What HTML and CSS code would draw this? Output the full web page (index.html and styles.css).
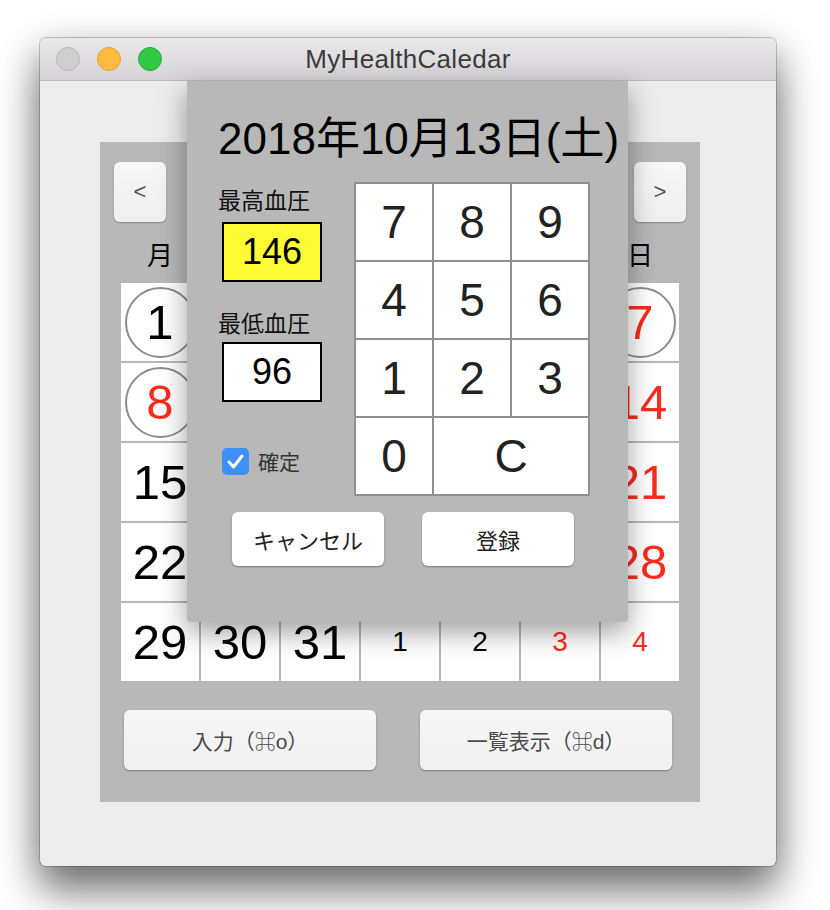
FILE: index.html
```html
<!DOCTYPE html>
<html lang="ja">
<head>
<meta charset="utf-8">
<title>MyHealthCaledar</title>
<link rel="stylesheet" href="styles.css">
</head>
<body>
<div class="stage">
  <div class="window">
    <div class="titlebar">
      <div class="lights">
        <span class="light close"></span>
        <span class="light min"></span>
        <span class="light max"></span>
      </div>
      <div class="wtitle">MyHealthCaledar</div>
      <div></div>
    </div>
    <div class="content">
      <div class="panel">
        <div class="nav">
          <button class="navbtn">&lt;</button>
          <button class="navbtn">&gt;</button>
        </div>
        <div class="weekdays">
          <span>月</span><span>火</span><span>水</span><span>木</span><span>金</span><span>土</span><span>日</span>
        </div>
        <div class="cal">
          <div class="cell"><span class="ring">1</span></div>
          <div class="cell">2</div>
          <div class="cell">3</div>
          <div class="cell">4</div>
          <div class="cell">5</div>
          <div class="cell">6</div>
          <div class="cell red"><span class="ring">7</span></div>

          <div class="cell red"><span class="ring">8</span></div>
          <div class="cell">9</div>
          <div class="cell">10</div>
          <div class="cell">11</div>
          <div class="cell">12</div>
          <div class="cell">13</div>
          <div class="cell red">14</div>

          <div class="cell">15</div>
          <div class="cell">16</div>
          <div class="cell">17</div>
          <div class="cell">18</div>
          <div class="cell">19</div>
          <div class="cell">20</div>
          <div class="cell red">21</div>

          <div class="cell">22</div>
          <div class="cell">23</div>
          <div class="cell">24</div>
          <div class="cell">25</div>
          <div class="cell">26</div>
          <div class="cell">27</div>
          <div class="cell red">28</div>

          <div class="cell">29</div>
          <div class="cell">30</div>
          <div class="cell">31</div>
          <div class="cell small">1</div>
          <div class="cell small">2</div>
          <div class="cell small red">3</div>
          <div class="cell small red">4</div>
        </div>
        <div class="actions">
          <button class="abtn">入力（⌘o）</button>
          <button class="abtn">一覧表示（⌘d）</button>
        </div>
      </div>
    </div>

    <div class="sheet">
      <div class="sheet-title">2018年10月13日(土)</div>
      <div class="sheet-body">
        <div class="fields">
          <div class="flabel">最高血圧</div>
          <div class="fbox hi">146</div>
          <div class="flabel second">最低血圧</div>
          <div class="fbox lo">96</div>
          <label class="confirm">
            <span class="check"><svg width="27" height="27" viewBox="0 0 27 27"><polyline points="7,14 11.5,19 20,8" fill="none" stroke="#fff" stroke-width="3" stroke-linecap="round" stroke-linejoin="round"/></svg></span>
            <span class="clabel">確定</span>
          </label>
        </div>
        <div class="pad">
          <div class="key">7</div>
          <div class="key">8</div>
          <div class="key">9</div>
          <div class="key">4</div>
          <div class="key">5</div>
          <div class="key">6</div>
          <div class="key">1</div>
          <div class="key">2</div>
          <div class="key">3</div>
          <div class="key">0</div>
          <div class="key wide">C</div>
        </div>
      </div>
      <div class="sheet-actions">
        <button class="sbtn">キャンセル</button>
        <button class="sbtn">登録</button>
      </div>
    </div>
  </div>
</div>
</body>
</html>
```
FILE: styles.css
```css
* { box-sizing: border-box; }
html, body { margin: 0; background: #ffffff; }
body {
  font-family: "Liberation Sans", "Noto Sans CJK JP", sans-serif;
  color: #000;
  min-height: 910px;
}
button { font-family: inherit; }

.stage { padding: 38px 0 44px 40px; }

.window {
  position: relative;
  width: 736px;
  height: 828px;
  background: #ececec;
  border-radius: 6px;
  box-shadow:
    0 0 0 1px rgba(0,0,0,0.2),
    0 26px 40px rgba(0,0,0,0.45),
    0 10px 40px rgba(0,0,0,0.25);
}

.titlebar {
  height: 43px;
  display: grid;
  grid-template-columns: 1fr auto 1fr;
  align-items: center;
  background: linear-gradient(#e9e7e9, #d5d3d5);
  border-bottom: 1px solid #bcbcbc;
  border-radius: 6px 6px 0 0;
}
.lights { display: flex; gap: 17px; padding-left: 16px; }
.light {
  width: 24px; height: 24px; border-radius: 50%;
  display: block;
}
.close { background: #d0cfd0; border: 1px solid #b9b8b9; }
.min { background: #fdbc40; border: 1px solid #dfa13a; }
.max { background: #33c748; border: 1px solid #2aab3a; }
.wtitle {
  font-size: 26px;
  color: #3b3b3b;
  letter-spacing: 0.3px;
}

.content { padding: 61px 0 0 60px; }

.panel {
  width: 600px;
  height: 660px;
  background: #b8b8b8;
  padding: 20px 14px 0 14px;
}
.nav { display: flex; justify-content: space-between; }
.navbtn {
  width: 52px; height: 60px;
  border: 0; border-radius: 6px;
  background: linear-gradient(#f7f7f7, #efefef);
  box-shadow: 0 1px 2px rgba(0,0,0,0.3);
  font-size: 22px; color: #555;
  padding: 0;
}

.weekdays {
  margin: 0 7px;
  height: 61px;
  display: grid;
  grid-template-columns: repeat(7, 78px);
  column-gap: 2px;
  align-items: center;
  justify-items: center;
  font-size: 26px;
  padding-top: 2px;
}

.cal {
  margin: 0 7px;
  display: grid;
  grid-template-columns: repeat(7, 78px);
  grid-auto-rows: 78px;
  gap: 2px;
}
.cell {
  background: #fff;
  display: flex;
  align-items: center;
  justify-content: center;
  font-size: 49px;
  line-height: 1;
  color: #000;
}
.cell.red { color: #fc2b1c; }
.cell.small { font-size: 28px; }
.ring {
  width: 71px; height: 71px;
  border: 2px solid #8c8c8c;
  border-radius: 50%;
  display: flex;
  align-items: center;
  justify-content: center;
}

.actions {
  margin-top: 29px;
  padding: 0 14px 0 10px;
  display: flex;
  justify-content: space-between;
}
.abtn {
  width: 252px; height: 60px;
  border: 0; border-radius: 6px;
  background: linear-gradient(#f6f6f6, #f1f1f1);
  box-shadow: 0 1px 2px rgba(0,0,0,0.35);
  font-size: 21px;
  color: #4a4a4a;
}

.sheet {
  position: absolute;
  left: 147px;
  top: 43px;
  width: 441px;
  height: 541px;
  background: #b8b8b8;
  padding: 32px 0 0 31px;
  box-shadow: 0 10px 28px rgba(0,0,0,0.38);
  border-radius: 0 0 4px 4px;
}
.sheet-title {
  font-size: 44px;
  line-height: 52px;
  white-space: nowrap;
}
.sheet-body {
  margin-top: 17px;
  display: flex;
}
.fields {
  width: 136px;
  padding-top: 4px;
  display: flex;
  flex-direction: column;
}
.flabel {
  font-size: 23px;
  line-height: 30px;
  color: #111;
}
.flabel.second { margin-top: 27px; }
.fbox {
  margin-top: 6px;
  margin-left: 4px;
  width: 100px; height: 60px;
  border: 2px solid #000;
  font-size: 36px;
  line-height: 56px;
  text-align: center;
  background: #fff;
}
.fbox.hi { background: #fdfb36; }
.fbox.lo { margin-top: 3px; }
.confirm {
  margin-top: 44px;
  margin-left: 4px;
  display: flex;
  align-items: center;
}
.check {
  width: 27px; height: 27px;
  border-radius: 5px;
  background: #3f8ff5;
  display: block;
}
.check svg { display: block; }
.clabel {
  margin-left: 9px;
  font-size: 21px;
  color: #333;
}

.pad {
  width: 236px;
  padding: 2px;
  background: #8f8f8f;
  display: grid;
  grid-template-columns: repeat(3, 76px);
  grid-auto-rows: 76px;
  gap: 2px;
}
.key {
  background: #fff;
  display: flex;
  align-items: center;
  justify-content: center;
  font-size: 46px;
  line-height: 1;
  color: #222;
}
.key.wide { grid-column: span 2; }

.sheet-actions {
  margin-top: 16px;
  margin-left: 14px;
  display: flex;
  gap: 38px;
}
.sbtn {
  width: 152px; height: 54px;
  border: 0; border-radius: 6px;
  background: #fff;
  box-shadow: 0 1px 2px rgba(0,0,0,0.35);
  font-size: 22px;
  color: #222;
}
```
